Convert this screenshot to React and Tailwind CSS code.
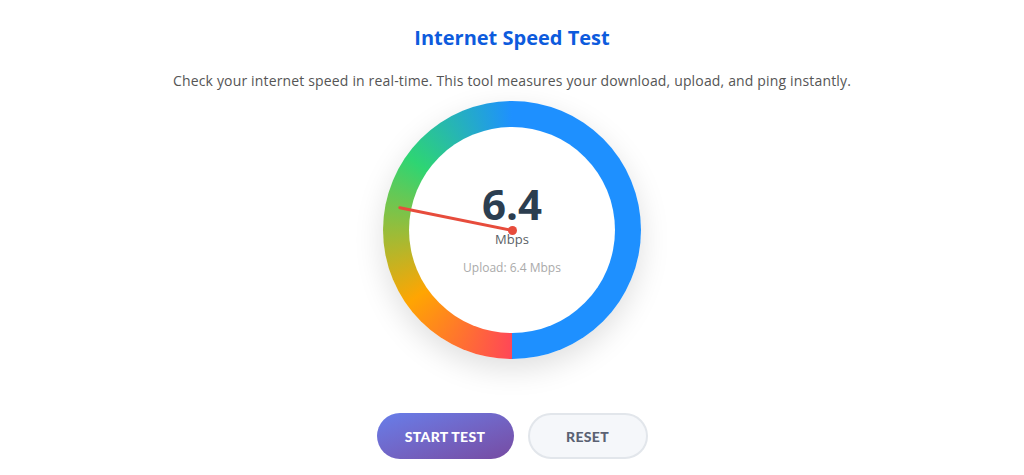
export default function App() {
  return (
    <div className="min-h-screen bg-white flex flex-col items-center font-['Open_Sans','Noto_Sans',sans-serif]">
      {/* Header */}
      <h1 className="mt-[24px] text-[20px] leading-[28px] font-bold text-[#0d5bdd]">Internet Speed Test</h1>
      <p className="mt-[19px] text-[14px] leading-[20px] tracking-[0.16px] text-[#555]">
        Check your internet speed in real-time. This tool measures your download, upload, and ping instantly.
      </p>

      {/* Gauge */}
      <div className="mt-[10px] w-[258px] h-[258px] rounded-full p-[26px] shadow-[0_10px_30px_rgba(0,0,0,0.13)] bg-[image:conic-gradient(from_180deg,#ff4757_0deg,#ffa502_55deg,#2ed573_125deg,#1e90ff_180deg,#1e90ff_360deg)]">
        <div className="relative w-full h-full rounded-full bg-white flex flex-col items-center">
          <div className="mt-[56px] text-[42px] leading-[42px] font-bold text-[#2c3e50]">6.4</div>
          <div className="mt-[6px] text-[13px] leading-[16px] text-[#5a5f66]">Mbps</div>
          <div className="mt-[14px] text-[12px] leading-[14px] text-[#aaa]">Upload: 6.4 Mbps</div>

          {/* needle */}
          <div className="absolute left-1/2 top-1/2 w-[116px] h-[3px] -mt-[1.5px] bg-[#e74c3c] rounded-full origin-left rotate-[191.5deg]" />
          <div className="absolute left-1/2 top-1/2 w-[9px] h-[9px] -ml-[4.5px] -mt-[4.5px] rounded-full bg-[#e74c3c]" />
        </div>
      </div>

      {/* Buttons */}
      <div className="mt-[54px] flex gap-[14px]">
        <button className="w-[137px] h-[46px] rounded-full bg-gradient-to-br from-[#667eea] to-[#764ba2] text-white text-[14px] font-black tracking-[0.3px] font-['Lato',sans-serif]">
          START TEST
        </button>
        <button className="w-[120px] h-[46px] rounded-full bg-[#f5f7fa] border-2 border-[#e2e6eb] text-[#5b6273] text-[14px] font-black tracking-[0.3px] font-['Lato',sans-serif]">
          RESET
        </button>
      </div>
    </div>
  );
}
